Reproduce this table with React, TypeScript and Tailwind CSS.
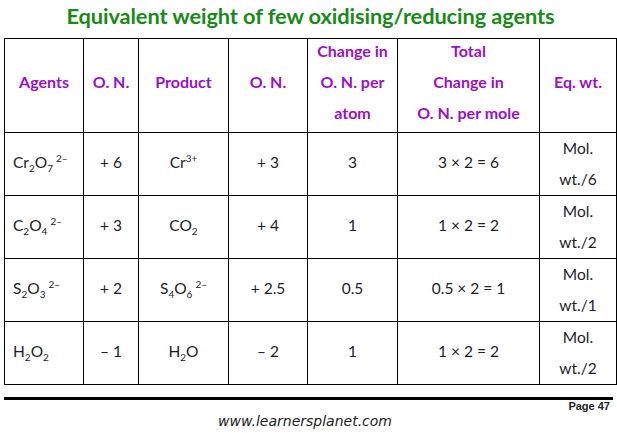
const rows = [
  {
    agent: (
      <>
        Cr<sub>2</sub>O<sub>7</sub>
        <sup className="ml-[3px]">2–</sup>
      </>
    ),
    on: "+ 6",
    product: (
      <>
        Cr<sup>3+</sup>
      </>
    ),
    on2: "+ 3",
    change: "3",
    total: "3 × 2 = 6",
    eq: "wt./6",
    h: "h-[61px]",
  },
  {
    agent: (
      <>
        C<sub>2</sub>O<sub>4</sub>
        <sup className="ml-[3px]">2–</sup>
      </>
    ),
    on: "+ 3",
    product: (
      <>
        CO<sub>2</sub>
      </>
    ),
    on2: "+ 4",
    change: "1",
    total: "1 × 2 = 2",
    eq: "wt./2",
    h: "h-[63px]",
  },
  {
    agent: (
      <>
        S<sub>2</sub>O<sub>3</sub>
        <sup className="ml-[3px]">2–</sup>
      </>
    ),
    on: "+ 2",
    product: (
      <>
        S<sub>4</sub>O<sub>6</sub>
        <sup className="ml-[3px]">2–</sup>
      </>
    ),
    on2: "+ 2.5",
    change: "0.5",
    total: "0.5 × 2 = 1",
    eq: "wt./1",
    h: "h-[62px]",
  },
  {
    agent: (
      <>
        H<sub>2</sub>O<sub>2</sub>
      </>
    ),
    on: "– 1",
    product: (
      <>
        H<sub>2</sub>O
      </>
    ),
    on2: "– 2",
    change: "1",
    total: "1 × 2 = 2",
    eq: "wt./2",
    h: "h-[63px]",
  },
];

const th = "border border-black text-center align-middle font-bold text-[#9a0fc9] text-[16px] px-0";
const td = "border border-black text-center align-middle px-0";

function Head({ children }: { children: React.ReactNode }) {
  return (
    <th className={th}>
      <span className="relative -top-[4px]">{children}</span>
    </th>
  );
}

export default function App() {
  return (
    <div className="w-[617px] h-[433px] bg-white overflow-hidden font-['Lato','Noto_Sans',sans-serif] text-[#1c1c2a]">
      <div className="h-[38px] flex items-center justify-center pb-[6px] pl-[4px]">
        <h1 className="text-[21.8px] font-bold text-[#178a17] tracking-[-0.1px]">
          Equivalent weight of few oxidising/reducing agents
        </h1>
      </div>
      <div className="pl-[4px] pr-[1px]">
        <table className="w-[612px] table-fixed border-collapse text-[15.5px] leading-[31px] [&_sub]:text-[10px] [&_sub]:top-[4px] [&_sub]:bottom-auto [&_sup]:text-[10px] [&_sup]:-top-[6px]">
          <colgroup>
            <col className="w-[79px]" />
            <col className="w-[55px]" />
            <col className="w-[90px]" />
            <col className="w-[79px]" />
            <col className="w-[90px]" />
            <col className="w-[142px]" />
            <col className="w-[77px]" />
          </colgroup>
          <thead>
            <tr className="h-[93px]">
              <Head>Agents</Head>
              <Head>O. N.</Head>
              <Head>Product</Head>
              <Head>O. N.</Head>
              <Head>
                Change in
                <br />
                O. N. per
                <br />
                atom
              </Head>
              <Head>
                Total
                <br />
                Change in
                <br />
                O. N. per mole
              </Head>
              <Head>Eq. wt.</Head>
            </tr>
          </thead>
          <tbody>
            {rows.map((r, i) => (
              <tr key={i} className={r.h}>
                <td className="border border-black align-middle pl-[8px] pb-[4px]">{r.agent}</td>
                <td className={td + " pb-[4px]"}>{r.on}</td>
                <td className={td + " pb-[4px]"}>{r.product}</td>
                <td className={td + " pb-[4px]"}>{r.on2}</td>
                <td className={td + " pb-[4px]"}>{r.change}</td>
                <td className={td + " pb-[4px]"}>{r.total}</td>
                <td className={td}>
                  Mol.
                  <br />
                  {r.eq}
                </td>
              </tr>
            ))}
          </tbody>
        </table>
      </div>
      <div className="mt-[12px] mx-[4px] border-t-[3px] border-black" />
      <div className="pr-[7px] text-right font-['Liberation_Sans',sans-serif] font-bold text-[11px] leading-[13px] text-[#222]">
        Page 47
      </div>
      <div className="text-center pr-[7px] font-['DejaVu_Sans',sans-serif] italic text-[14px] leading-[16px] text-[#222]">
        www.learnersplanet.com
      </div>
    </div>
  );
}
